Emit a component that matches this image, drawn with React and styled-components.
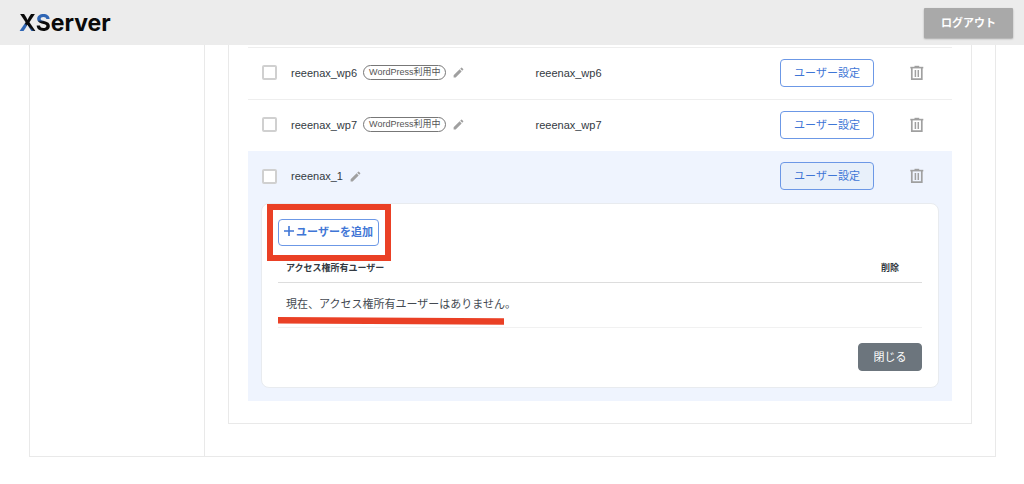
// #region Imports

import React, { useState } from 'react';

import styled, { createGlobalStyle } from 'styled-components';
import { MdEdit } from 'react-icons/md';

// #endregion Imports

// #region Styled Components

const GlobalStyle = createGlobalStyle`
  *, *::before, *::after {
    box-sizing: border-box;
  }

  body {
    margin: 0;
    background: #fff;
    color: #333a42;
    font-family: "Liberation Sans", "Noto Sans CJK JP", sans-serif;
    font-size: 11px;
    line-height: 16px;
  }

  button {
    font-family: inherit;
    cursor: pointer;
  }
`;

const Header = styled.header`
  display: flex;
  align-items: center;
  justify-content: space-between;
  height: 45px;
  padding: 0 11px 0 19px;
  background: #ececec;
`;

const Logo = styled.a`
  color: #0a0a0a;
  font-family: Inter, sans-serif;
  font-size: 23px;
  font-weight: 700;
  line-height: 32px;
  text-decoration: none;
`;

const LogoLetter = styled.span`
  background: ${(props) => props.$fill};
  background-clip: text;
  color: transparent;
`;

const LogoutButton = styled.button`
  width: 89px;
  height: 30px;
  padding: 0 0 2px;
  border: 0;
  border-radius: 1px;
  background: #a9a9a9;
  box-shadow: 0 1px 2px rgba(0, 0, 0, 0.3);
  color: #fff;
  font-size: 11px;
  font-weight: 700;
`;

const Layout = styled.div`
  display: flex;
  margin: 0 28px 27px 29px;
  border: 1px solid #e9e9e9;
  border-top: 0;
`;

const Sidebar = styled.aside`
  flex: 0 0 175px;
  border-right: 1px solid #e9e9e9;
`;

const Main = styled.main`
  flex: 1;
  padding: 0 23px 32px;
`;

const Box = styled.section`
  padding: 2px 19px 22px;
  border: 1px solid #e9e9e9;
  border-top: 0;
`;

const DatabaseTable = styled.table`
  width: 100%;
  border-collapse: collapse;
  border-spacing: 0;
  table-layout: fixed;
`;

const DatabaseRow = styled.tr`
  height: ${(props) => (props.$open ? '51px' : '52px')};
  border-top: 1px solid ${(props) => (props.$open ? '#eff4fe' : '#eeeeee')};
  background: ${(props) => (props.$open ? '#eff4fe' : 'transparent')};
`;

const Cell = styled.td`
  padding: ${(props) => props.$pad || '0 0 2px'};
  vertical-align: middle;
`;

const CheckBox = styled.input`
  display: block;
  width: 15px;
  height: 15px;
  margin: 0;
  appearance: none;
  border: 2px solid #d0d0d0;
  border-radius: 2px;
  background: #fff;

  &:checked {
    background: #3f76d6;
  }
`;

const NameGroup = styled.div`
  display: flex;
  align-items: center;
  gap: 6px;
`;

const Badge = styled.span`
  padding: 0 5px;
  border: 1px solid #777;
  border-radius: 8px;
  color: #555;
  font-size: 9px;
  line-height: 13px;
`;

const IconButton = styled.button`
  display: flex;
  padding: 0;
  border: 0;
  background: none;
  color: #a0a0a0;
`;

const OutlineButton = styled.button`
  display: flex;
  align-items: center;
  justify-content: center;
  gap: 2px;
  width: ${(props) => (props.$strong ? '101px' : '94px')};
  height: ${(props) => (props.$strong ? '27px' : '28px')};
  padding: 0 0 2px;
  border: 1px solid #6c98e6;
  border-radius: 4px;
  background: ${(props) => (props.$active ? '#e8f0fa' : '#fff')};
  color: #3f76d6;
  font-size: 11px;
  font-weight: ${(props) => (props.$strong ? 700 : 400)};
  white-space: nowrap;
`;

const PanelCell = styled.td`
  padding: 0 13px 13px;
  background: #eff4fe;
`;

const Panel = styled.div`
  padding: 15px 16px 16px;
  border: 1px solid #e8ebef;
  border-radius: 8px;
  background: #fff;
`;

const Highlight = styled.div`
  position: relative;
  width: fit-content;

  &::after {
    position: absolute;
    inset: -15px -12px -15px -11px;
    border: 6px solid #ea4025;
    content: '';
    pointer-events: none;
  }
`;

const UserTable = styled.table`
  width: 100%;
  margin-top: 8px;
  border-collapse: collapse;
  border-spacing: 0;
`;

const UserHead = styled.th`
  width: ${(props) => props.$width || 'auto'};
  height: 29px;
  padding: 0 8px;
  border-bottom: 1px solid #dddddd;
  font-size: 9px;
  font-weight: 700;
  text-align: ${(props) => props.$align || 'left'};
`;

const EmptyCell = styled.td`
  height: 45px;
  padding: 0 8px 2px;
  border-bottom: 1px solid #f1f1f1;
  color: #444a52;
`;

const Marked = styled.span`
  position: relative;
`;

const Stroke = styled.svg`
  position: absolute;
  top: 19px;
  left: -8px;
`;

const PanelFooter = styled.div`
  display: flex;
  justify-content: flex-end;
  margin-top: 15px;
`;

const CloseButton = styled.button`
  width: 64px;
  height: 28px;
  padding: 0 0 2px;
  border: 1px solid #6c757d;
  border-radius: 4px;
  background: #6c757d;
  color: #fff;
  font-size: 11px;
`;

// #endregion Styled Components

const databases = ['reeenax_wp6', 'reeenax_wp7', 'reeenax_1'];

const TrashIcon = () => (
  <svg width="14" height="16" viewBox="0 0 14 16" fill="none" stroke="currentColor" aria-hidden="true">
    <path d="M0.3 2.6H13.3" strokeWidth="1.6" />
    <path d="M4.5 1.4H9.2" strokeWidth="1.2" />
    <path d="M1.8 3V14.2H11.8V3" strokeWidth="1.7" />
    <path d="M5.4 5V12M8.3 5V12" strokeWidth="1.5" />
  </svg>
);

const PlusIcon = () => (
  <svg width="10" height="10" viewBox="0 0 10 10" stroke="currentColor" strokeWidth="1.6" aria-hidden="true">
    <path d="M5 0V10M0 5H10" />
  </svg>
);

const DatabaseRowComponent = ({ name, open, onToggle }) => {
  const isWordPress = name.includes('_wp');

  return (
    <DatabaseRow $open={open}>
      <Cell $pad="0 0 2px 14px">
        <CheckBox type="checkbox" aria-label={name} />
      </Cell>
      <Cell>
        <NameGroup>
          <span>{name}</span>
          {isWordPress ? <Badge>WordPress利用中</Badge> : null}
          <IconButton type="button" aria-label="編集">
            <MdEdit size={13} />
          </IconButton>
        </NameGroup>
      </Cell>
      <Cell>{isWordPress ? name : null}</Cell>
      <Cell>
        <OutlineButton type="button" $active={open} onClick={onToggle}>
          ユーザー設定
        </OutlineButton>
      </Cell>
      <Cell $pad="0 0 2px 36px">
        <IconButton type="button" aria-label="削除">
          <TrashIcon />
        </IconButton>
      </Cell>
    </DatabaseRow>
  );
};

const UserPanelComponent = ({ onClose }) => (
  <Panel>
    <Highlight>
      <OutlineButton type="button" $strong>
        <PlusIcon />
        ユーザーを追加
      </OutlineButton>
    </Highlight>

    <UserTable>
      <thead>
        <tr>
          <UserHead scope="col">アクセス権所有ユーザー</UserHead>
          <UserHead scope="col" $width="64px" $align="center">削除</UserHead>
        </tr>
      </thead>
      <tbody>
        <tr>
          <EmptyCell colSpan={2}>
            <Marked>
              現在、アクセス権所有ユーザーはありません。
              <Stroke width="226" height="8" viewBox="0 0 226 8" aria-hidden="true">
                <path d="M0 0L226 1.2V7.8L0 6.4Z" fill="#ea4025" />
              </Stroke>
            </Marked>
          </EmptyCell>
        </tr>
      </tbody>
    </UserTable>

    <PanelFooter>
      <CloseButton type="button" onClick={onClose}>閉じる</CloseButton>
    </PanelFooter>
  </Panel>
);

const App = () => {
  const [openName, setOpenName] = useState('reeenax_1');

  return (
    <>
      <GlobalStyle />
      <Header>
        <Logo href="#">
          <LogoLetter $fill="linear-gradient(40deg, #2f66b5 40%, #0a0a0a 46%)">X</LogoLetter>
          <LogoLetter $fill="linear-gradient(172deg, #2f66b5 38%, #0a0a0a 46%)">S</LogoLetter>
          erver
        </Logo>
        <LogoutButton type="button">ログアウト</LogoutButton>
      </Header>

      <Layout>
        <Sidebar />
        <Main>
          <Box>
            <DatabaseTable>
              <colgroup>
                <col style={{ width: 43 }} />
                <col />
                <col />
                <col style={{ width: 94 }} />
                <col style={{ width: 78 }} />
              </colgroup>
              <tbody>
                {databases.map((name) => (
                  <React.Fragment key={name}>
                    <DatabaseRowComponent
                      name={name}
                      open={openName === name}
                      onToggle={() => setOpenName(openName === name ? '' : name)}
                    />
                    {openName === name ? (
                      <tr>
                        <PanelCell colSpan={5}>
                          <UserPanelComponent onClose={() => setOpenName('')} />
                        </PanelCell>
                      </tr>
                    ) : null}
                  </React.Fragment>
                ))}
              </tbody>
            </DatabaseTable>
          </Box>
        </Main>
      </Layout>
    </>
  );
};

export default App;
